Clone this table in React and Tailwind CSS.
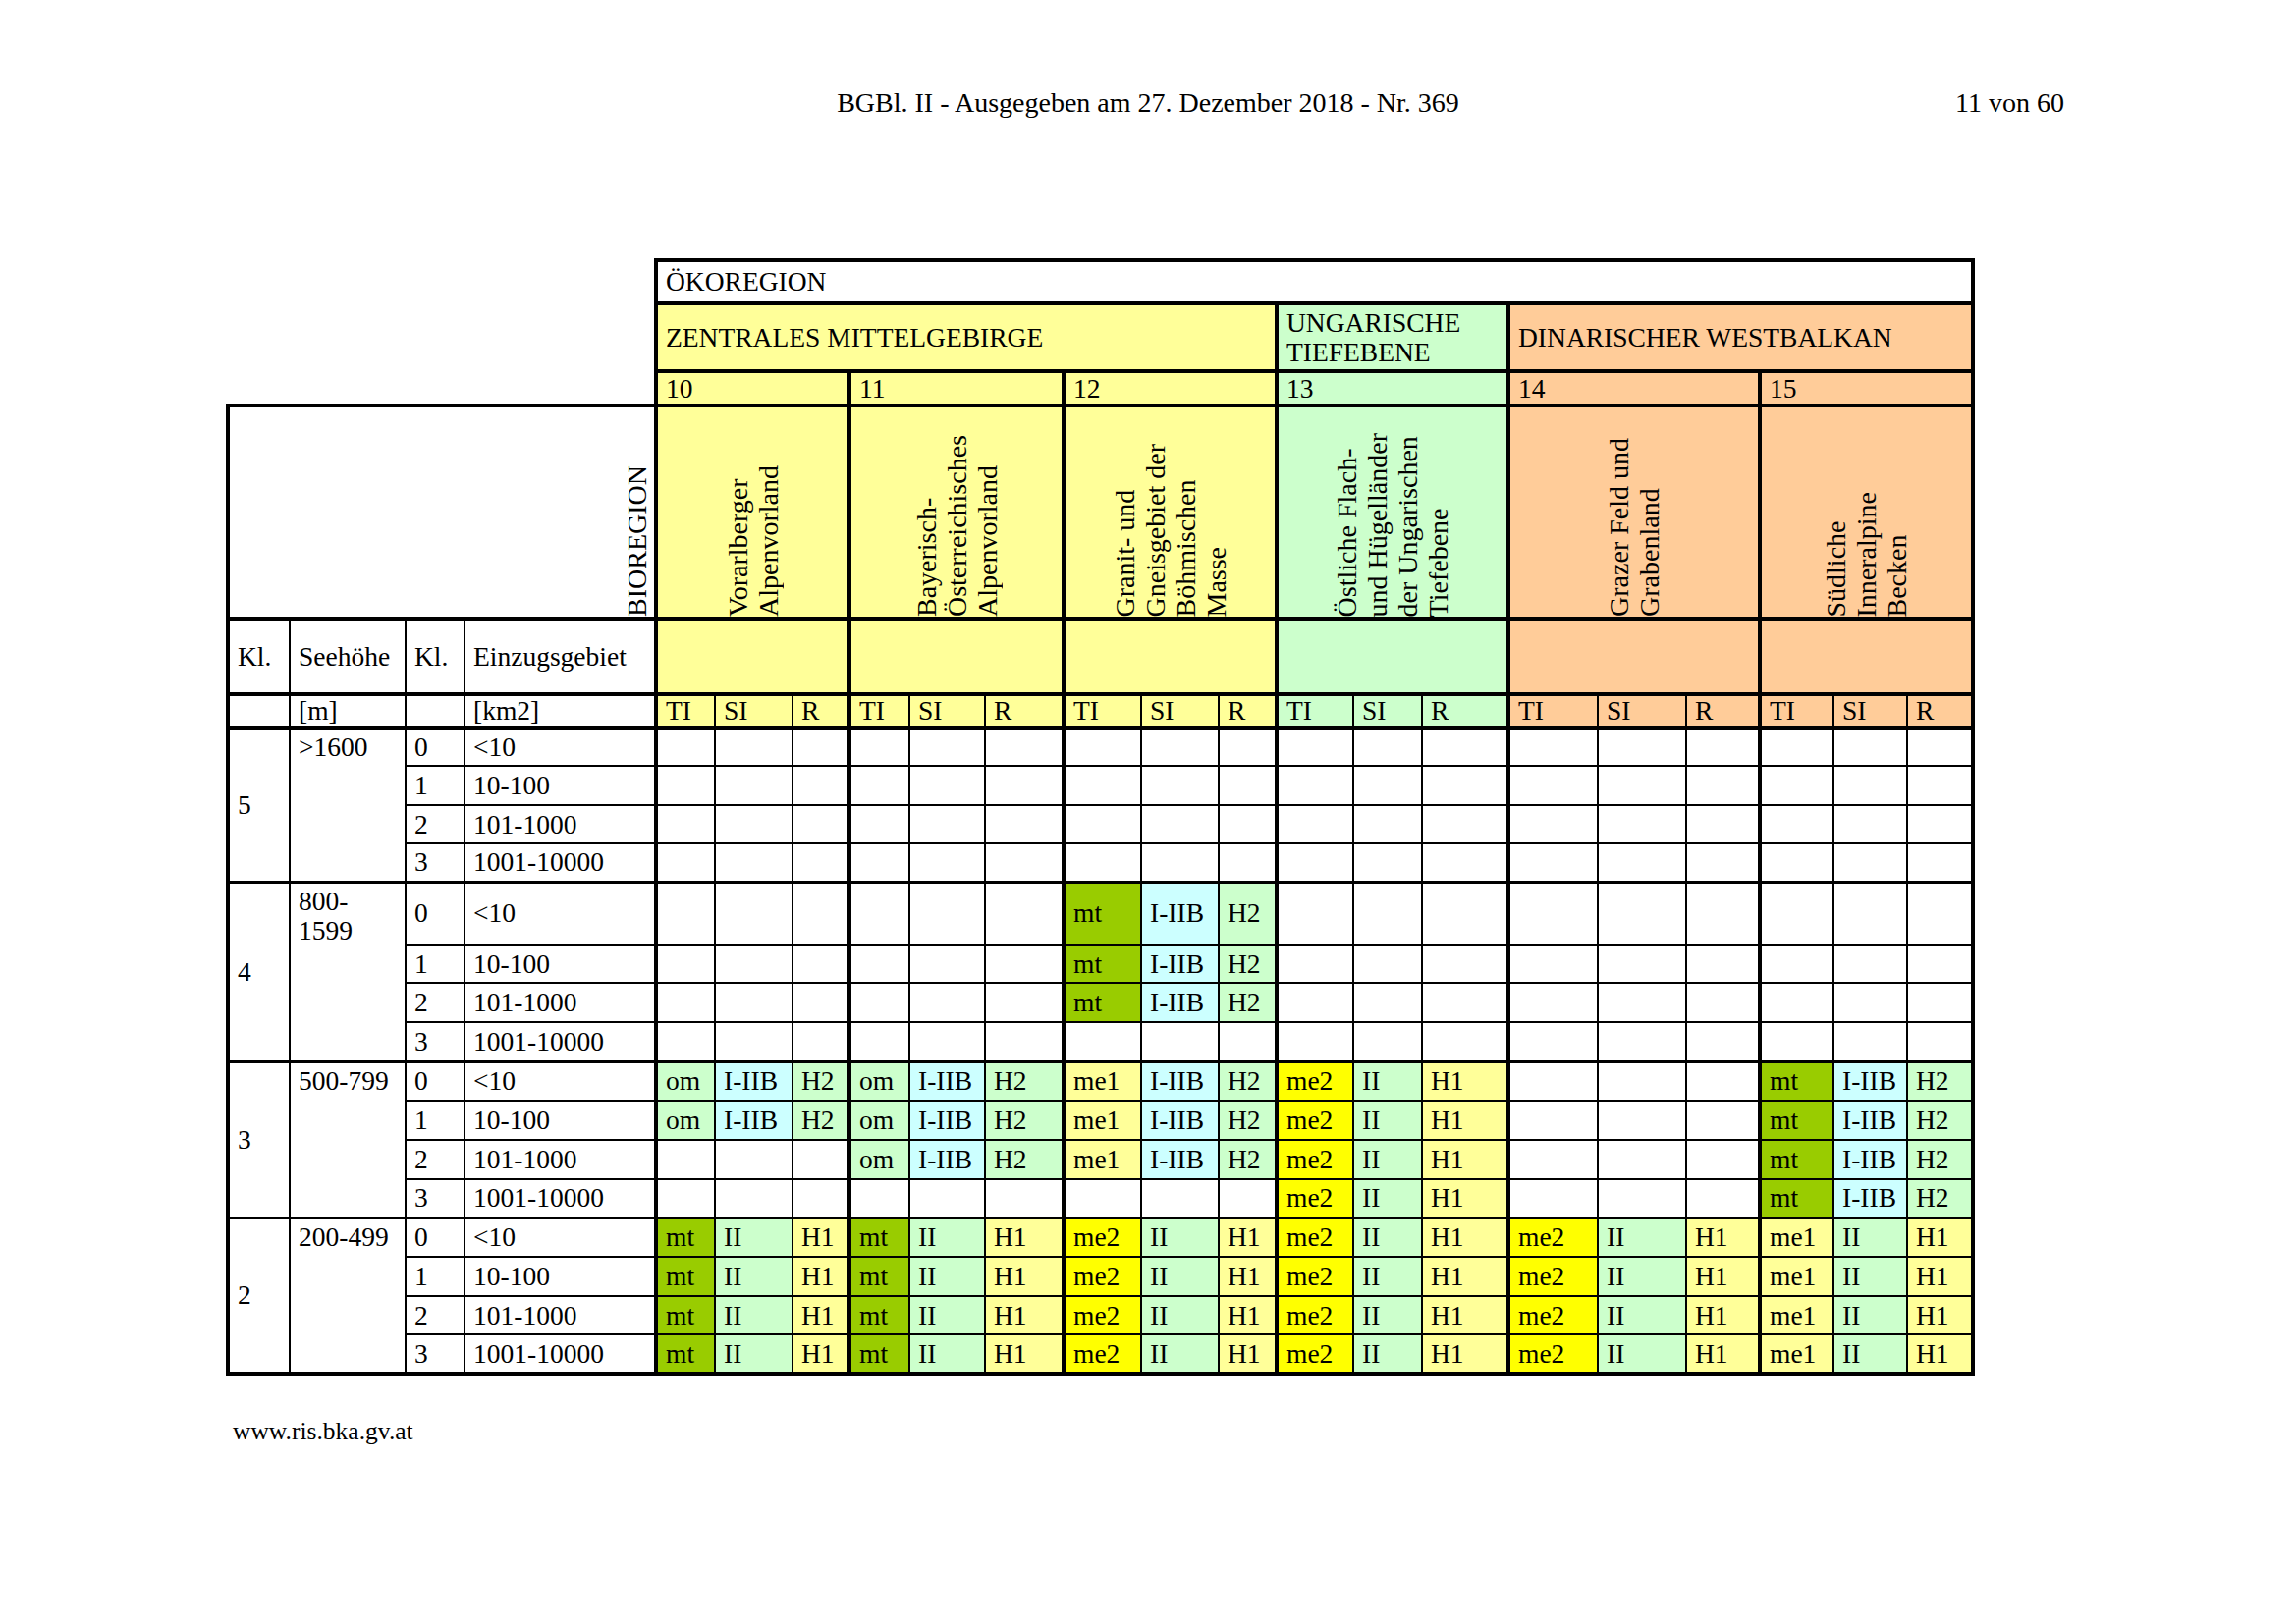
import clsx from "clsx";

// cell colours as in the printed table
const Y = "bg-[#ffff99]";
const YY = "bg-[#ffff00]";
const G = "bg-[#ccffcc]";
const C = "bg-[#ccffff]";
const MT = "bg-[#99cc00]";
const O = "bg-[#ffcc99]";

const colWidths = [
  "w-[63px]", "w-[118px]", "w-[60px]", "w-[195px]",
  "w-[60px]", "w-[79px]", "w-[58px]",
  "w-[61px]", "w-[77px]", "w-[80px]",
  "w-[79px]", "w-[79px]", "w-[59px]",
  "w-[78px]", "w-[70px]", "w-[88px]",
  "w-[91px]", "w-[90px]", "w-[75px]",
  "w-[75px]", "w-[75px]", "w-[67px]",
];

const bioregions = [
  { nr: "10", bg: Y, name: ["Vorarlberger", "Alpenvorland"] },
  { nr: "11", bg: Y, name: ["Bayerisch-", "Österreichisches", "Alpenvorland"] },
  { nr: "12", bg: Y, name: ["Granit- und", "Gneisgebiet der", "Böhmischen", "Masse"] },
  { nr: "13", bg: G, name: ["Östliche Flach-", "und Hügelländer", "der Ungarischen", "Tiefebene"] },
  { nr: "14", bg: O, name: ["Grazer Feld und", "Grabenland"] },
  { nr: "15", bg: O, name: ["Südliche", "Inneralpine", "Becken"] },
];

const omH2 = [["om", G], ["I-IIB", C], ["H2", G]];
const mtH2 = [["mt", MT], ["I-IIB", C], ["H2", G]];
const me1H2 = [["me1", Y], ["I-IIB", C], ["H2", G]];
const me2H1 = [["me2", YY], ["II", G], ["H1", Y]];
const mtH1 = [["mt", MT], ["II", G], ["H1", Y]];
const me1H1 = [["me1", Y], ["II", G], ["H1", Y]];
const none = [null, null, null, null, null, null];

const groups = [
  {
    kl: "5",
    hoehe: ">1600",
    rows: [
      { kl: "0", area: "<10", h: "h-[39px]", v: none },
      { kl: "1", area: "10-100", h: "h-[40px]", v: none },
      { kl: "2", area: "101-1000", h: "h-[39px]", v: none },
      { kl: "3", area: "1001-10000", h: "h-[39px]", v: none },
    ],
  },
  {
    kl: "4",
    hoehe: (
      <>
        800-
        <br />
        1599
      </>
    ),
    rows: [
      { kl: "0", area: "<10", h: "h-[64px]", v: [null, null, mtH2, null, null, null] },
      { kl: "1", area: "10-100", h: "h-[39px]", v: [null, null, mtH2, null, null, null] },
      { kl: "2", area: "101-1000", h: "h-[40px]", v: [null, null, mtH2, null, null, null] },
      { kl: "3", area: "1001-10000", h: "h-[40px]", v: none },
    ],
  },
  {
    kl: "3",
    hoehe: "500-799",
    rows: [
      { kl: "0", area: "<10", h: "h-[40px]", v: [omH2, omH2, me1H2, me2H1, null, mtH2] },
      { kl: "1", area: "10-100", h: "h-[40px]", v: [omH2, omH2, me1H2, me2H1, null, mtH2] },
      { kl: "2", area: "101-1000", h: "h-[40px]", v: [null, omH2, me1H2, me2H1, null, mtH2] },
      { kl: "3", area: "1001-10000", h: "h-[39px]", v: [null, null, null, me2H1, null, mtH2] },
    ],
  },
  {
    kl: "2",
    hoehe: "200-499",
    rows: [
      { kl: "0", area: "<10", h: "h-[40px]", v: [mtH1, mtH1, me2H1, me2H1, me2H1, me1H1] },
      { kl: "1", area: "10-100", h: "h-[40px]", v: [mtH1, mtH1, me2H1, me2H1, me2H1, me1H1] },
      { kl: "2", area: "101-1000", h: "h-[39px]", v: [mtH1, mtH1, me2H1, me2H1, me2H1, me1H1] },
      { kl: "3", area: "1001-10000", h: "h-[40px]", v: [mtH1, mtH1, me2H1, me2H1, me2H1, me1H1] },
    ],
  },
];

const cell = "border-2 border-black px-[8px] py-0 align-middle whitespace-nowrap";

function VerticalText({ lines }) {
  return (
    <div className="inline-block align-bottom rotate-180 [writing-mode:vertical-rl] text-left text-[28px] leading-[31px]">
      {lines.map((l, i) => (
        <span key={i}>
          {l}
          {i < lines.length - 1 && <br />}
        </span>
      ))}
    </div>
  );
}

export default function App() {
  return (
    <div className="w-[2338px] h-[1653px] bg-white text-black font-['Liberation_Serif','Times_New_Roman',serif]">
      {/* Page header */}
      <header className="grid grid-cols-[1fr_auto_1fr] px-[236px] pt-[89px] text-[28px] leading-[32px]">
        <div />
        <div>BGBl. II - Ausgegeben am 27. Dezember 2018 - Nr. 369</div>
        <div className="text-right">11 von 60</div>
      </header>

      <table className="ml-[230px] mt-[142px] w-[1777px] table-fixed border-collapse text-[27.5px] leading-[30px]">
        <colgroup>
          {colWidths.map((w, i) => (
            <col key={i} className={w} />
          ))}
        </colgroup>
        <tbody>
          {/* Ökoregion */}
          <tr className="h-[44px]">
            <td colSpan={4} className="border-0 p-0" />
            <td colSpan={18} className={clsx(cell, "border-4 bg-white")}>ÖKOREGION</td>
          </tr>
          <tr className="h-[69px]">
            <td colSpan={4} className="border-0 p-0" />
            <td colSpan={9} className={clsx(cell, "border-4", Y)}>ZENTRALES MITTELGEBIRGE</td>
            <td colSpan={3} className={clsx(cell, "border-4", G)}>
              UNGARISCHE
              <br />
              TIEFEBENE
            </td>
            <td colSpan={6} className={clsx(cell, "border-4", O)}>DINARISCHER WESTBALKAN</td>
          </tr>
          <tr className="h-[35px]">
            <td colSpan={4} className="border-0 p-0" />
            {bioregions.map((b) => (
              <td key={b.nr} colSpan={3} className={clsx(cell, "border-4", b.bg)}>
                {b.nr}
              </td>
            ))}
          </tr>

          {/* Bioregion names */}
          <tr className="h-[217px]">
            <td colSpan={4} className="border-4 border-black p-0 pr-[2px] align-bottom text-right">
              <VerticalText lines={["BIOREGION"]} />
            </td>
            {bioregions.map((b) => (
              <td key={b.nr} colSpan={3} className={clsx("border-4 border-black p-0 align-bottom text-center", b.bg)}>
                <VerticalText lines={b.name} />
              </td>
            ))}
          </tr>

          <tr className="h-[77px]">
            <td className={clsx(cell, "border-l-4 border-b-4")}>Kl.</td>
            <td className={clsx(cell, "border-b-4")}>Seehöhe</td>
            <td className={clsx(cell, "border-b-4")}>Kl.</td>
            <td className={clsx(cell, "border-b-4")}>Einzugsgebiet</td>
            {bioregions.map((b, i) => (
              <td
                key={b.nr}
                colSpan={3}
                className={clsx(cell, "border-l-4 border-b-4", i === 5 && "border-r-4", b.bg)}
              />
            ))}
          </tr>

          <tr className="h-[33px]">
            <td className={clsx(cell, "border-l-4 border-b-4")} />
            <td className={clsx(cell, "border-b-4")}>[m]</td>
            <td className={clsx(cell, "border-b-4")} />
            <td className={clsx(cell, "border-b-4")}>[km2]</td>
            {bioregions.map((b, bi) =>
              ["TI", "SI", "R"].map((t, i) => (
                <td
                  key={b.nr + t}
                  className={clsx(
                    cell,
                    "border-b-4",
                    i === 0 && "border-l-4",
                    bi === 5 && i === 2 && "border-r-4",
                    b.bg
                  )}
                >
                  {t}
                </td>
              ))
            )}
          </tr>

          {/* Data rows */}
          {groups.map((g, gi) =>
            g.rows.map((r, ri) => {
              const top = ri === 0 && gi > 0 ? "border-t-[3px]" : "";
              const bottom = gi === 3 && ri === 3 ? "border-b-4" : "";
              return (
                <tr key={`${gi}-${ri}`} className={r.h}>
                  {ri === 0 && (
                    <>
                      <td rowSpan={4} className={clsx(cell, "border-l-4", top, gi === 3 && "border-b-4")}>
                        {g.kl}
                      </td>
                      <td rowSpan={4} className={clsx(cell, "align-top pt-[3px]", top, gi === 3 && "border-b-4")}>
                        {g.hoehe}
                      </td>
                    </>
                  )}
                  <td className={clsx(cell, top, bottom)}>{r.kl}</td>
                  <td className={clsx(cell, top, bottom)}>{r.area}</td>
                  {r.v.map((trip, bi) =>
                    [0, 1, 2].map((i) => {
                      const v = trip ? trip[i] : null;
                      return (
                        <td
                          key={`${bi}-${i}`}
                          className={clsx(
                            cell,
                            top,
                            bottom,
                            i === 0 && "border-l-4",
                            bi === 5 && i === 2 && "border-r-4",
                            v ? v[1] : "bg-white"
                          )}
                        >
                          {v ? v[0] : ""}
                        </td>
                      );
                    })
                  )}
                </tr>
              );
            })
          )}
        </tbody>
      </table>

      <p className="ml-[237px] mt-[42px] text-[25.5px] leading-[29px]">www.ris.bka.gv.at</p>
    </div>
  );
}
